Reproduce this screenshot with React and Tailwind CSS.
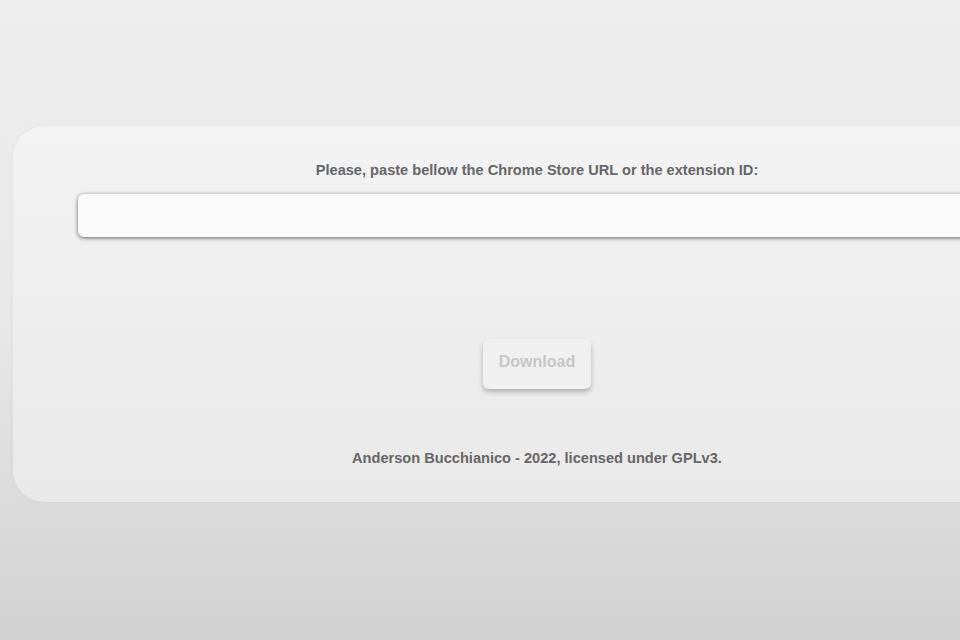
export default function App() {
  return (
    <div className="w-screen h-screen overflow-hidden bg-gradient-to-b from-[#eeeeee] via-[#e8e8e8] to-[#d2d2d2] font-['Liberation_Sans',Arial,sans-serif]">
      <div className="pt-[126px] pl-[13px]">
        <div className="w-[1048px] h-[376px] rounded-[32px] bg-gradient-to-b from-[#f3f3f3] to-[#e9e9e9] shadow-[0_0_6px_rgba(0,0,0,0.04)] flex flex-col items-center px-[65px]">
          <p className="mt-[35px] text-[14.6px] font-bold text-[#666] leading-[18px]">
            Please, paste bellow the Chrome Store URL or the extension ID:
          </p>
          <input
            type="text"
            className="mt-[15px] w-full h-[43px] rounded-[6px] bg-[#fafafa] outline-none shadow-[0_1px_4px_rgba(0,0,0,0.6)]"
          />
          <button className="mt-[102px] w-[108px] h-[50px] rounded-[6px] bg-[#f0f0f0] text-[16px] font-bold text-[#c6c6c6] leading-[20px] pb-[4px] shadow-[0_3px_5px_rgba(0,0,0,0.25)]">
            Download
          </button>
          <p className="mt-[60px] text-[14.6px] font-bold text-[#666] leading-[18px]">
            Anderson Bucchianico - 2022, licensed under GPLv3.
          </p>
        </div>
      </div>
    </div>
  )
}
